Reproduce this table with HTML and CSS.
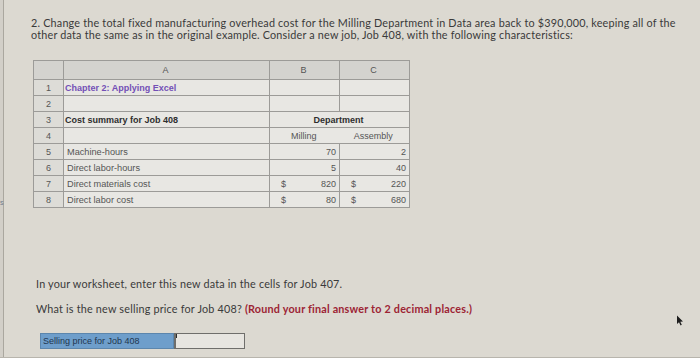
FILE: index.html
```html
<!DOCTYPE html>
<html lang="en">
<head>
<meta charset="utf-8">
<title>Job 408 selling price</title>
<link rel="stylesheet" href="styles.css">
</head>
<body>
<div class="edge"><span class="edge-glyph">s</span></div>
<main class="content">
  <p class="intro">2. Change the total fixed manufacturing overhead cost for the Milling Department in Data area back to $390,000, keeping all of the<br>other data the same as in the original example. Consider a new job, Job 408, with the following characteristics:</p>

  <table class="sheet">
    <colgroup>
      <col class="c-num"><col class="c-a"><col class="c-b"><col class="c-c">
    </colgroup>
    <thead>
      <tr class="hdr"><th></th><th>A</th><th>B</th><th>C</th></tr>
    </thead>
    <tbody>
      <tr><td class="num">1</td><td class="title">Chapter 2: Applying Excel</td><td></td><td></td></tr>
      <tr><td class="num">2</td><td></td><td></td><td></td></tr>
      <tr><td class="num">3</td><td class="bold">Cost summary for Job 408</td><td class="dept" colspan="2">Department</td></tr>
      <tr><td class="num">4</td><td></td><td class="center open-right">Milling</td><td class="center">Assembly</td></tr>
      <tr><td class="num">5</td><td class="lbl">Machine-hours</td><td class="val">70</td><td class="val">2</td></tr>
      <tr><td class="num">6</td><td class="lbl">Direct labor-hours</td><td class="val">5</td><td class="val">40</td></tr>
      <tr><td class="num">7</td><td class="lbl">Direct materials cost</td><td class="val"><span class="money"><span>$</span><span>820</span></span></td><td class="val"><span class="money"><span>$</span><span>220</span></span></td></tr>
      <tr><td class="num">8</td><td class="lbl">Direct labor cost</td><td class="val"><span class="money"><span>$</span><span>80</span></span></td><td class="val"><span class="money"><span>$</span><span>680</span></span></td></tr>
    </tbody>
  </table>

  <p class="note">In your worksheet, enter this new data in the cells for Job 407.</p>
  <p class="question">What is the new selling price for Job 408? <strong class="hint">(Round your final answer to 2 decimal places.)</strong></p>

  <div class="answer">
    <span class="answer-label">Selling price for Job 408</span>
    <span class="answer-input"><span class="caret"></span></span>
  </div>
</main>
<svg class="pointer" width="8" height="11" viewBox="0 0 8 11" aria-hidden="true"><path d="M1 0.5 L1 9 L3 7.2 L4.6 10.4 L5.8 9.8 L4.3 6.8 L7 6.6 Z" fill="#1e1e1e"/></svg>
</body>
</html>
```

FILE: styles.css
```css
html, body {
  margin: 0;
  padding: 0;
}
body {
  width: 700px;
  height: 358px;
  box-sizing: border-box;
  overflow: hidden;
  position: relative;
  display: flex;
  background: #dcd9d1;
  border-bottom: 1px solid #b8b5ad;
  font-family: Lato, "Open Sans", sans-serif;
  color: #3e3e3e;
}
.edge {
  position: relative;
  flex: 0 0 3px;
  background: #d2cfc8;
  border-right: 1px solid #aaa79f;
}
.edge-glyph {
  position: absolute;
  left: 0;
  top: 199px;
  font: 7px "Liberation Sans", sans-serif;
  color: #6f7c8e;
}
.content {
  flex: 1;
  padding: 17px 0 0 27px;
}
.intro,
.note,
.question {
  font-size: 10.8px;
  letter-spacing: 0.2px;
  line-height: 12px;
  color: #3a3a3a;
}
.intro {
  margin: 0;
}
.sheet {
  margin: 19px 0 0 2px;
  border-collapse: collapse;
  table-layout: fixed;
  width: 377px;
  font-family: "Liberation Sans", Arial, sans-serif;
  font-size: 9px;
  color: #555;
  background: #e8e7e3;
}
.c-num { width: 30px; }
.c-a { width: 206px; }
.c-b { width: 70px; }
.c-c { width: 70px; }
.sheet th, .sheet td {
  border: 1px solid #9c9b98;
  padding: 0 3px 0 1px;
  height: 15px;
  line-height: 14px;
  white-space: nowrap;
}
.sheet .hdr th {
  height: 18px;
  background: #d4d3cf;
  font-weight: normal;
  font-size: 9px;
  color: #555;
  text-align: center;
}
.sheet .num {
  background: #dddcd7;
  text-align: center;
  padding: 0;
  color: #555;
}
.sheet .title {
  font-weight: bold;
  color: #7350b6;
  font-size: 9px;
}
.sheet .bold {
  font-weight: bold;
  color: #2e2e2e;
  font-size: 9px;
}
.sheet .lbl {
  padding-left: 3px;
  font-size: 9.2px;
}
.sheet .dept {
  text-align: center;
  font-weight: bold;
  color: #2e2e2e;
}
.sheet .center {
  text-align: center;
}
.sheet .open-right {
  border-right-style: hidden;
}
.sheet .val {
  text-align: right;
  padding-right: 3px;
}
.money {
  display: flex;
  justify-content: space-between;
  padding-left: 10px;
}
.note {
  margin: 70px 0 0 5px;
}
.question {
  margin: 13px 0 0 5px;
}
.hint {
  color: #9c2434;
  font-weight: bold;
}
.answer {
  display: flex;
  margin: 18px 0 0 9px;
  height: 16px;
}
.answer-label {
  width: 130px;
  background: #6e9ecb;
  border: 1px solid #5c86ad;
  padding-left: 2px;
  font: 9px/14px "Liberation Sans", Arial, sans-serif;
  color: #22364f;
}
.answer-input {
  position: relative;
  width: 68px;
  background: #e7e5e0;
  border: 1px solid #6f6e6b;
  border-left-width: 2px;
}
.caret {
  position: absolute;
  left: 0;
  top: 0;
  width: 1px;
  height: 4px;
  background: #2a2a2a;
}
.pointer {
  position: absolute;
  left: 676px;
  top: 315px;
}
```
